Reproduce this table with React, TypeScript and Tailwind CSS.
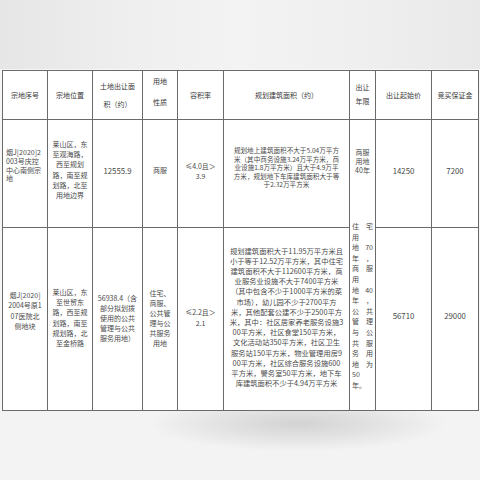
const HEAD: { lines: string[]; cls?: string }[] = [
  { lines: ['宗地序号'] },
  { lines: ['宗地位置'] },
  { lines: ['土地出让面', '积（约）'], cls: 'leading-[18px]' },
  { lines: ['用地', '性质'], cls: 'leading-[21px] pb-[6px]' },
  { lines: ['容积率'] },
  { lines: ['规划建筑面积（约）'] },
  { lines: ['出让', '年限'], cls: 'leading-[14px] pb-[2px]' },
  { lines: ['出让起始价'] },
  { lines: ['竞买保证金'] },
];

const ROW1: { lines: string[]; cls?: string }[] = [
  { lines: ['烟J[2020]2', '003号庆控', '中心南侧宗', '地'], cls: 'text-left pl-[3px] leading-[8.7px] pb-[16px]' },
  { lines: ['莱山区，东', '至观海路，', '西至规划', '路，南至规', '划路，北至', '用地边界'], cls: 'leading-[10.2px] pb-[8px]' },
  { lines: ['12555.9'], cls: 'text-[7.8px] pb-[6px]' },
  { lines: ['商服'], cls: 'pb-[6px]' },
  { lines: ['≤4.0且＞', '3.9'], cls: 'leading-[10px] pb-[6px]' },
  {
    lines: [
      '规划地上建筑面积不大于5.04万平方',
      '米（其中商务设施3.24万平方米，商',
      '业设施1.8万平方米）且大于4.9万平',
      '方米，规划地下车库建筑面积大于等',
      '于2.32万平方米',
    ],
    cls: 'text-[6.6px] leading-[8.6px] pb-[12px]',
  },
  { lines: ['商服', '用地', '40年'], cls: 'leading-[9px] pb-[24px]' },
  { lines: ['14250'], cls: 'text-[7.8px] pb-[6px]' },
  { lines: ['7200'], cls: 'text-[7.8px] pb-[6px]' },
];

const ROW2: { lines: string[]; cls?: string }[] = [
  { lines: ['烟J[2020]', '2004号原1', '07医院北', '侧地块'], cls: 'leading-[10.3px] pb-[17px]' },
  { lines: ['莱山区，东', '至世贸东', '路，西至规', '划路，南至', '规划路，北', '至金桥路'], cls: 'leading-[10.2px] pb-[3px]' },
  { lines: ['56938.4（含', '部分拟划拨', '使用的公共', '管理与公共', '服务用地）'], cls: 'leading-[10px] pb-[3px]' },
  { lines: ['住宅、', '商服、', '公共管', '理与公', '共服务', '用地'], cls: 'leading-[10px] pb-[2px]' },
  { lines: ['≤2.2且＞', '2.1'], cls: 'leading-[11px] pb-[2px]' },
  {
    lines: [
      '规划建筑面积大于11.95万平方米且',
      '小于等于12.52万平方米，其中住宅',
      '建筑面积不大于112600平方米，商',
      '业服务业设施不大于7400平方米',
      '（其中包含不少于1000平方米的菜',
      '市场），幼儿园不少于2700平方',
      '米，其他配套公建不少于2500平方',
      '米，其中：社区居家养老服务设施3',
      '00平方米，社区食堂150平方米，',
      '文化活动站350平方米，社区卫生',
      '服务站150平方米，物业管理用房9',
      '00平方米，社区综合服务设施600',
      '平方米，警务室50平方米，地下车',
      '库建筑面积不少于4.94万平方米',
    ],
    cls: 'text-[7.3px] leading-[10.2px] pb-[4px]',
  },
];

// 出让年限 column, row 2: justified two-char lines
const TERM = [
  ['住', '宅'], ['用'], ['地', '70'], ['年', '，'], ['商', '服'], ['用'], ['地', '40'], ['年', '，'],
  ['公', '共'], ['管', '理'], ['与', '公'], ['共', '服'], ['务', '用'], ['地', '为'], ['50'], ['年。'],
];

function Lines({ lines }: { lines: string[] }) {
  return (
    <>
      {lines.map((l, i) => (
        <span key={i} className="block whitespace-nowrap">
          {l}
        </span>
      ))}
    </>
  );
}

const td = 'border border-[#6a6a6a] p-0 text-center align-middle';

export default function App() {
  return (
    <div className="flex h-[480px] w-[480px] flex-col overflow-hidden bg-[#ececec] font-['Noto_Sans_CJK_SC','Microsoft_YaHei',sans-serif] text-[7px] text-[#4a4a4a]">
      <div className="h-[69px] shrink-0 bg-[linear-gradient(90deg,#e6e6e6_0%,#eeeeee_25%,#f3f3f3_50%,#efefef_75%,#e9e9e9_100%)]" />
      <div className="shrink-0 bg-[#f6f6f6] px-[2px] pt-[1px]">
        <table className="w-[476px] table-fixed border-collapse bg-white">
          <colgroup>
            <col className="w-[45px]" />
            <col className="w-[45px]" />
            <col className="w-[50px]" />
            <col className="w-[35px]" />
            <col className="w-[46px]" />
            <col className="w-[126px]" />
            <col className="w-[26px]" />
            <col className="w-[56px]" />
            <col className="w-[47px]" />
          </colgroup>
          <tbody>
            <tr className="h-[47px] text-[#383838]">
              {HEAD.map((c, i) => (
                <td key={i} className={`${td} ${c.cls ?? ''}`}>
                  <Lines lines={c.lines} />
                </td>
              ))}
            </tr>
            <tr className="h-[108px]">
              {ROW1.map((c, i) => (
                <td key={i} className={`${td} ${c.cls ?? ''}`}>
                  <Lines lines={c.lines} />
                </td>
              ))}
            </tr>
            <tr className="h-[183px]">
              {ROW2.map((c, i) => (
                <td key={i} className={`${td} ${c.cls ?? ''}`}>
                  <Lines lines={c.lines} />
                </td>
              ))}
              <td className={`${td} align-top`}>
                <div className="relative -mt-[7px] bg-white px-[2px] leading-[10.6px]">
                  {TERM.map((l, i) => (
                    <div key={i} className="flex justify-between whitespace-nowrap">
                      {l.map((s, j) => (
                        <span key={j}>{s}</span>
                      ))}
                    </div>
                  ))}
                </div>
              </td>
              <td className={`${td} text-[7.8px] pb-[7px]`}>56710</td>
              <td className={`${td} text-[7.8px] pb-[7px]`}>29000</td>
            </tr>
          </tbody>
        </table>
      </div>
      <div className="flex-1 bg-[radial-gradient(ellipse_150px_28px_at_62%_18%,#d3d3d3_0%,#e2e2e2_50%,#f3f3f3_100%)]" />
    </div>
  );
}
